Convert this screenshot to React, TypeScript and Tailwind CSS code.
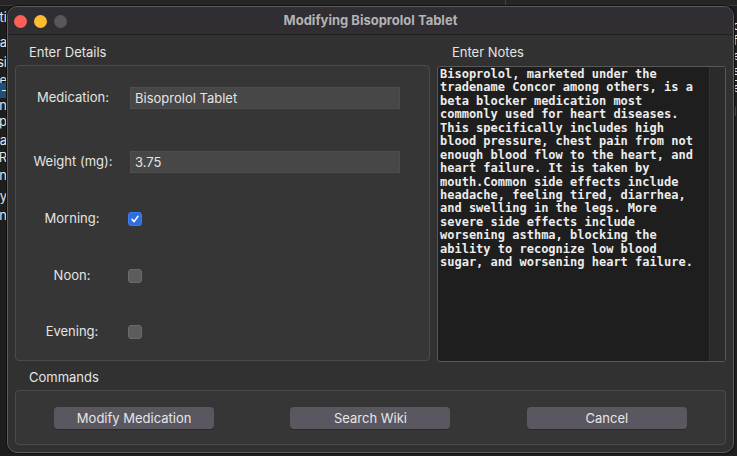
import React from "react";

const notes = [
  "Bisoprolol, marketed under the",
  "tradename Concor among others, is a",
  "beta blocker medication most",
  "commonly used for heart diseases.",
  "This specifically includes high",
  "blood pressure, chest pain from not",
  "enough blood flow to the heart, and",
  "heart failure. It is taken by",
  "mouth.Common side effects include",
  "headache, feeling tired, diarrhea,",
  "and swelling in the legs. More",
  "severe side effects include",
  "worsening asthma, blocking the",
  "ability to recognize low blood",
  "sugar, and worsening heart failure.",
];

const leftBits: [number, string, boolean?][] = [
  [10, "Mediti"],
  [35, "Indica"],
  [55, "Bisosi"],
  [73, "Doe"],
  [83, " -", true],
  [98, "Taken"],
  [114, "Step"],
  [133, "Para"],
  [150, "RR"],
  [168, "In"],
  [189, "My"],
  [208, "On"],
];

const rightBits: [number, string][] = [
  [22, "c"],
  [37, "f"],
  [52, "e"],
  [67, "s"],
  [76, "-"],
  [84, "e"],
  [108, "l"],
];

function Checkbox({ checked }: { checked?: boolean }) {
  if (checked) {
    return (
      <div className="w-[14px] h-[14px] rounded-[3px] bg-[#2d6fe0] border border-[#3b7cf0] flex items-center justify-center">
        <svg width="10" height="10" viewBox="0 0 10 10">
          <path d="M2 5.3 L4.1 7.6 L8 2.3" fill="none" stroke="white" strokeWidth="1.6" strokeLinecap="round" strokeLinejoin="round" />
        </svg>
      </div>
    );
  }
  return <div className="w-[14px] h-[14px] rounded-[3px] bg-[#5c5c5e] border border-[#6a6a6c]" />;
}

export default function App() {
  return (
    <div
      className="relative w-[737px] h-[456px] bg-[#1e1e1e] overflow-hidden text-[#e4e4e4]"
      style={{ fontFamily: "Inter, 'Noto Sans', sans-serif" }}
    >
      {/* desktop backdrop */}
      <div className="absolute left-0 top-0 w-[737px] h-[6px] bg-[#262626] border-b border-[#3a3a3a]" />
      <div className="absolute left-[480px] top-0 w-[26px] h-[6px] border-r border-[#444]" />
      {leftBits.map(([y, t, sel]) => (
        <div
          key={y}
          className={`absolute left-[-60px] w-[67px] h-[15px] text-right text-[13px] leading-[15px] ${sel ? "bg-[#1f4e7c]" : ""}`}
          style={{ top: y }}
        >
          {t}
        </div>
      ))}
      {rightBits.map(([y, t]) => (
        <div key={y} className="absolute left-[733px] text-[12px] leading-[7px]" style={{ top: y }}>
          {t}
        </div>
      ))}

      {/* window */}
      <div className="absolute left-[7px] top-[6px] w-[727px] h-[447px] rounded-[10px] border border-[#5c5c5c] bg-[#313131] overflow-hidden flex flex-col shadow-[0_0_0_1px_#111]">
        {/* title bar */}
        <div className="relative h-[28px] shrink-0 bg-[#302e33] border-b border-[#1f1f1f] flex items-center justify-center">
          <div className="absolute left-[6px] top-[8px] flex gap-[7px]">
            <div className="w-[13px] h-[13px] rounded-full bg-[#fe5f57]" />
            <div className="w-[13px] h-[13px] rounded-full bg-[#febc2e]" />
            <div className="w-[13px] h-[13px] rounded-full bg-[#58565b]" />
          </div>
          <span className="text-[13px] font-bold text-[#b3b3b3] pt-[1px]">Modifying Bisoprolol Tablet</span>
        </div>

        {/* body */}
        <div className="flex-1 flex flex-col px-[7px] pb-[9px]">
          <div className="flex gap-[7px]">
            {/* left column */}
            <div className="w-[415px] flex flex-col">
              <div className="h-[30px] pt-[9px] pl-[14px] text-[13px] leading-[16px]">Enter Details</div>
              <div className="h-[296px] rounded-[4px] border border-[#4b4b4b] bg-[#363636] pt-[21px] flex flex-col">
                <div className="flex items-center h-[22px]">
                  <div className="w-[114px] text-center text-[13px]">Medication:</div>
                  <div className="w-[270px] h-[22px] bg-[#474747] border border-[#4e4e4e] text-[13px] leading-[20px] pl-[4px]">Bisoprolol Tablet</div>
                </div>
                <div className="flex items-center h-[22px] mt-[42px]">
                  <div className="w-[114px] text-center text-[13px]">Weight (mg):</div>
                  <div className="w-[270px] h-[22px] bg-[#474747] border border-[#4e4e4e] text-[13px] leading-[20px] pl-[4px]">3.75</div>
                </div>
                <div className="flex items-center h-[22px] mt-[35px]">
                  <div className="w-[112px] text-center text-[13px]">Morning:</div>
                  <Checkbox checked />
                </div>
                <div className="flex items-center h-[22px] mt-[35px]">
                  <div className="w-[112px] text-center text-[13px]">Noon:</div>
                  <Checkbox />
                </div>
                <div className="flex items-center h-[22px] mt-[34px]">
                  <div className="w-[112px] text-center text-[13px]">Evening:</div>
                  <Checkbox />
                </div>
              </div>
            </div>

            {/* right column */}
            <div className="w-[289px] flex flex-col">
              <div className="h-[30px] pt-[9px] pl-[15px] text-[13px] leading-[16px]">Enter Notes</div>
              <div className="h-[296px] mt-[1px] rounded-[3px] border border-[#585858] bg-[#1e1e1e] flex overflow-hidden">
                <div
                  className="flex-1 pt-[1px] pl-[2px] text-[12px] leading-[13.43px] font-bold text-[#ececec] whitespace-pre"
                  style={{ fontFamily: "'DejaVu Sans Mono', monospace" }}
                >
                  {notes.map((l, i) => (
                    <div key={i}>{l}</div>
                  ))}
                </div>
                <div className="w-[16px] bg-[#2b2b2d] border-l border-[#333]" />
              </div>
            </div>
          </div>

          <div className="h-[28px] pt-[7px] pl-[14px] text-[13px] leading-[16px]">Commands</div>
          <div className="h-[55px] rounded-[4px] border border-[#4b4b4b] bg-[#363636] flex items-center justify-around">
            {["Modify Medication", "Search Wiki", "Cancel"].map((b) => (
              <div
                key={b}
                className="w-[160px] h-[22px] rounded-[4px] bg-[#5a5760] text-[13px] leading-[22px] text-center text-[#e6e6e6] shadow-[0_1px_0_#2a2a2a]"
              >
                {b}
              </div>
            ))}
          </div>
        </div>
      </div>
    </div>
  );
}
